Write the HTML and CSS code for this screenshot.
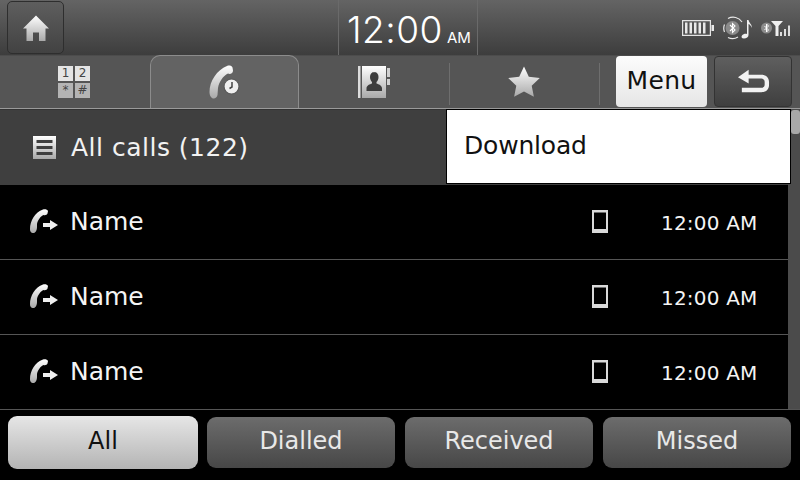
FILE: index.html
```html
<!DOCTYPE html>
<html lang="en">
<head>
  <meta charset="UTF-8" />
  <title>Call history</title>
  <link rel="stylesheet" href="styles.css">
</head>
<body>
  <svg class="defs" width="0" height="0">
    <defs>
      <linearGradient id="chrome" x1="0" y1="0" x2="0" y2="1">
        <stop offset="0" stop-color="#ffffff"/>
        <stop offset="1" stop-color="#a9a9a9"/>
      </linearGradient>
    </defs>
  </svg>

  <div class="screen">
    <header class="status">
      <button class="home">
        <svg width="28" height="28" viewBox="0 0 28 28">
          <path fill="url(#chrome)" d="M14 1.500 L27 14.500 L23.500 14.500 L23.500 27 L17 27 L17 18.500 L11 18.500 L11 27 L4.500 27 L4.500 14.500 L1 14.500 Z"/>
        </svg>
      </button>
      <div class="clock"><span class="clock-time">12:00</span><span class="clock-ampm">AM</span></div>
      <div class="status-icons">
        <svg width="33" height="18" viewBox="0 0 33 18">
          <path fill="none" stroke="#e4e4e4" stroke-width="1.200" d="M.6 1.600h27.800v14.800H.6z"/>
          <path fill="#e8e8e8" d="M3 3.500h2.500v11H3zM7.500 3.500H10v11H7.500zM12 3.500h2.500v11H12zM16.500 3.500H19v11h-2.500zM21 3.500h2.500v11H21zM29.500 6H32v6h-2.500z"/>
        </svg>
        <svg width="32" height="24" viewBox="0 0 32 24">
          <circle cx="10.500" cy="12" r="7" fill="#8a8a8a"/>
          <path fill="none" stroke="#e8e8e8" stroke-width="1.200" d="M6 2.500A10.500 10.500 0 0 1 20 6M6 21.500a10.500 10.500 0 0 0 10-.5M2.500 8.500A10 10 0 0 0 2.500 16"/>
          <path fill="none" stroke="#fff" stroke-width="1.100" d="M8 9l5 5-2.500 2.500v-9L13 10l-5 5"/>
          <path fill="#f0f0f0" d="M25 4h1.500c.5 3 3.500 4 3.500 8-1-2-2-3.500-3.500-4v11c0 2-2 3.500-4.500 3.500S19 21 20 19.500s3.500-2 5-1.500z"/>
        </svg>
        <svg width="32" height="18" viewBox="0 0 32 18">
          <circle cx="5.500" cy="9" r="5.500" fill="#8c8c8c"/>
          <path fill="none" stroke="#fff" stroke-width="1" d="M3.500 7l4 4-2 2V5l2 2-4 4"/>
          <path fill="#efefef" d="M10 2h12l-4.500 5v10h-3V7z"/>
          <path fill="#dcdcdc" d="M19 13h2v4h-2zM23 10h2v7h-2zM27 6.500h2V17h-2z"/>
        </svg>
      </div>
    </header>

    <nav class="tabs">
      <div class="tab">
        <div class="keypad">
          <span>1</span><span>2</span><span class="dim">*</span><span class="dim">#</span>
        </div>
      </div>
      <div class="tab tab-active">
        <svg width="34" height="36" viewBox="0 0 34 36">
          <path fill="url(#chrome)" d="M19 2C21 1 23.500 1.500 24.500 3.500L25 6.500C25 8.500 23.500 10 21.500 10L20 9.500C15 12 11 18 10 24L9.500 31C9 34 6 35.500 4 34C2.500 33 1.500 31 1.500 28C1.500 17 9 6 19 2Z"/>
          <circle cx="23.500" cy="22.500" r="7.500" fill="#efefef" stroke="#5a5a5a" stroke-width="1.200"/>
          <path fill="none" stroke="#444" stroke-width="1.500" d="M24 18v5l-2.500 1.500"/>
        </svg>
      </div>
      <div class="tab tab-line">
        <svg width="34" height="34" viewBox="0 0 34 34">
          <path fill="#dcdcdc" d="M1 1h2.500v32H1z"/>
          <path fill="url(#chrome)" d="M5 1h24v32H5z"/>
          <path fill="#d0d0d0" d="M30 3h3v9h-3zM30 14h3v6h-3z"/>
          <path fill="#3d3d3d" d="M17 7c3 0 4.500 2 4.500 5 0 2.500-1 4-2 5v1.500c2 1 5.500 1.500 5.500 5V26H9.500v-2.500c0-3.500 3.500-4 5.500-5V17c-1-1-2-2.500-2-5 0-3 1.500-5 4.500-5z"/>
        </svg>
      </div>
      <div class="tab tab-line">
        <svg width="34" height="34" viewBox="0 0 34 34">
          <path fill="url(#chrome)" d="M17 1.500l4.800 10.300 11 1.300-8.100 7.600 2.200 11.100L17 26.400 7.100 31.800l2.200-11.100-8.100-7.600 11-1.300z"/>
        </svg>
      </div>
      <div class="tab-actions">
        <button class="btn-menu">Menu</button>
        <button class="btn-back">
          <svg width="33" height="26" viewBox="0 0 34 26">
            <path fill="#f2f2f2" d="M1 8L12 .5v5h13c5 0 8 3 8 7.500v3c0 4.500-3 7.500-8 7.500H5v-4.500h19c3 0 4.500-1 4.500-3.500v-2.500c0-2.500-1.500-3.500-4.500-3.500H12v5z"/>
          </svg>
        </button>
      </div>
    </nav>

    <main class="content">
      <div class="list">
        <div class="list-head">
          <svg width="23" height="23" viewBox="0 0 23 23">
            <path fill="url(#chrome)" fill-rule="evenodd" d="M0 0h23v23H0zM3.500 4v3h16V4zM3.500 10v3h16v-3zM3.500 16v3h16v-3z"/>
          </svg>
          <span class="head-title">All calls (122)</span>
        </div>

        <div class="row">
          <svg class="call-icon" width="30" height="26" viewBox="0 0 30 26">
            <path fill="url(#chrome)" d="M14 .5C16 0 18.500 .5 19 2L18.500 4.500C18 6 16 6.500 14.500 6C12 7 9 10.500 8 15L8 18C8 22 6 24.500 3.500 24C1.500 23.500 1 22 1 20C1 12 6 3 14 .5Z"/>
            <path fill="#efefef" d="M14 14h7v-3l8 5-8 5v-3h-7z"/>
          </svg>
          <span class="row-name">Name</span>
          <svg class="device" width="16" height="23" viewBox="0 0 16 23">
            <path fill="#d9d9d9" fill-rule="evenodd" d="M0 0h16v23H0zM2 2.500V19h12V2.500z"/>
          </svg>
          <span class="row-time">12:00 AM</span>
        </div>
        <div class="row">
          <svg class="call-icon" width="30" height="26" viewBox="0 0 30 26">
            <path fill="url(#chrome)" d="M14 .5C16 0 18.500 .5 19 2L18.500 4.500C18 6 16 6.500 14.500 6C12 7 9 10.500 8 15L8 18C8 22 6 24.500 3.500 24C1.500 23.500 1 22 1 20C1 12 6 3 14 .5Z"/>
            <path fill="#efefef" d="M14 14h7v-3l8 5-8 5v-3h-7z"/>
          </svg>
          <span class="row-name">Name</span>
          <svg class="device" width="16" height="23" viewBox="0 0 16 23">
            <path fill="#d9d9d9" fill-rule="evenodd" d="M0 0h16v23H0zM2 2.500V19h12V2.500z"/>
          </svg>
          <span class="row-time">12:00 AM</span>
        </div>
        <div class="row">
          <svg class="call-icon" width="30" height="26" viewBox="0 0 30 26">
            <path fill="url(#chrome)" d="M14 .5C16 0 18.500 .5 19 2L18.500 4.500C18 6 16 6.500 14.500 6C12 7 9 10.500 8 15L8 18C8 22 6 24.500 3.500 24C1.500 23.500 1 22 1 20C1 12 6 3 14 .5Z"/>
            <path fill="#efefef" d="M14 14h7v-3l8 5-8 5v-3h-7z"/>
          </svg>
          <span class="row-name">Name</span>
          <svg class="device" width="16" height="23" viewBox="0 0 16 23">
            <path fill="#d9d9d9" fill-rule="evenodd" d="M0 0h16v23H0zM2 2.500V19h12V2.500z"/>
          </svg>
          <span class="row-time">12:00 AM</span>
        </div>
      </div>
      <div class="scrollbar"><div class="scroll-thumb"></div></div>

      <div class="dropdown">Download</div>
    </main>

    <footer class="filters">
      <button class="filter filter-on">All</button>
      <button class="filter">Dialled</button>
      <button class="filter">Received</button>
      <button class="filter">Missed</button>
    </footer>
  </div>
</body>
</html>
```

FILE: styles.css
```css
* {
  box-sizing: border-box;
}

body {
  margin: 0;
  background: #000;
  font-family: "DejaVu Sans", sans-serif;
}

button {
  font-family: inherit;
  padding: 0;
}

.defs {
  position: absolute;
}

.screen {
  width: 800px;
  height: 480px;
  overflow: hidden;
  display: flex;
  flex-direction: column;
}

/* top status bar */
.status {
  height: 55px;
  display: flex;
  align-items: stretch;
  background: linear-gradient(to bottom, #646464, #3d3d3d);
}

.home {
  width: 57px;
  height: 53px;
  margin: 1px 0 0 7px;
  display: flex;
  align-items: center;
  justify-content: center;
  border: 1px solid #2e2e2e;
  border-radius: 5px;
  background: linear-gradient(to bottom, #5e5e5e, #424242);
}

.clock {
  width: 140px;
  margin-left: 274px;
  display: flex;
  align-items: baseline;
  padding: 7px 0 0 8px;
  font-family: Inter, sans-serif;
  color: #fff;
  border-left: 1px solid #6a6a6a;
  border-right: 1px solid #6a6a6a;
}

.clock-time {
  font-size: 37px;
  font-weight: 300;
  letter-spacing: 0.5px;
}

.clock-ampm {
  font-size: 15px;
  margin-left: 4px;
}

.status-icons {
  margin-left: auto;
  padding-right: 7px;
  display: flex;
  align-items: center;
  gap: 7px;
}

/* tab row */
.tabs {
  height: 54px;
  display: flex;
  background: #555;
  border-bottom: 1px solid #9a9a9a;
  box-shadow: inset 0 1px 0 #4c4c4c;
}

.tab {
  width: 150px;
  height: 53px;
  padding-right: 2px;
  display: flex;
  align-items: center;
  justify-content: center;
  position: relative;
}

.tab-line::after {
  content: "";
  position: absolute;
  right: 0;
  top: 8px;
  bottom: 3px;
  width: 1px;
  background: #6e6e6e;
}

.tab-active {
  width: 149px;
  margin-right: 1px;
  padding-right: 0;
  background: #636363;
  border: 1px solid #8c8c8c;
  border-bottom: none;
  border-radius: 10px 10px 0 0;
}

.keypad {
  display: grid;
  grid-template-columns: repeat(2, 15px);
  grid-template-rows: repeat(2, 15px);
  gap: 2px;
}

.keypad span {
  display: flex;
  align-items: center;
  justify-content: center;
  font-size: 12px;
  color: #444;
  background: #e4e4e4;
}

.keypad .dim {
  background: #b4b4b4;
}

.tab-actions {
  flex: 1;
  display: flex;
  gap: 7px;
  padding: 1px 0 1px 16px;
}

.btn-menu {
  width: 91px;
  height: 51px;
  padding-bottom: 3px;
  font-size: 25px;
  letter-spacing: 0.3px;
  color: #111;
  border: none;
  border-radius: 4px;
  background: linear-gradient(to bottom, #fcfcfc, #e6e6e6);
}

.btn-back {
  width: 78px;
  height: 51px;
  display: flex;
  align-items: center;
  justify-content: center;
  border: 1px solid #333;
  border-radius: 4px;
  background: linear-gradient(to bottom, #5f5f5f, #3f3f3f);
}

/* list area */
.content {
  height: 301px;
  display: flex;
  position: relative;
}

.list {
  width: 788px;
  background: #000;
}

.list-head {
  height: 76px;
  display: flex;
  align-items: center;
  gap: 15px;
  padding-left: 33px;
  color: #f2f2f2;
  background: #3f3f3f;
  border-top: 1px solid #333;
}

.head-title {
  font-size: 25px;
  letter-spacing: 0.5px;
}

.row {
  height: 75px;
  display: flex;
  align-items: center;
  padding-right: 31px;
  color: #f4f4f4;
  border-bottom: 1px solid #555;
}

.call-icon {
  margin-left: 29px;
}

.row-name {
  margin-left: 11px;
  padding-bottom: 2px;
  font-size: 25px;
}

.device {
  margin: 0 0 2px auto;
}

.row-time {
  width: 96px;
  margin: 2px 0 0 53px;
  font-size: 20px;
  letter-spacing: 0.2px;
  white-space: nowrap;
  text-align: right;
}

.scrollbar {
  flex: 1;
  background: #4b4b4b;
  border-bottom: 1px solid #555;
}

.scroll-thumb {
  width: 9px;
  height: 24px;
  margin: 1px 0 0 3px;
  border-radius: 3px;
  background: #a8a8a8;
}

.dropdown {
  position: absolute;
  left: 446px;
  top: 0;
  width: 345px;
  height: 75px;
  display: flex;
  align-items: center;
  padding: 0 0 2px 17px;
  font-size: 25px;
  letter-spacing: -0.2px;
  color: #111;
  background: #fff;
  border: 1px solid #000;
}

/* filter buttons */
.filters {
  flex: 1;
  display: flex;
  align-items: center;
  gap: 10px;
  padding: 0 9px 5px 8px;
  background: #000;
}

.filter {
  width: 188px;
  height: 51px;
  padding-bottom: 3px;
  font-size: 24px;
  color: #e8e8e8;
  border: none;
  border-radius: 9px;
  background: linear-gradient(to bottom, #6c6c6c, #474747);
}

.filter-on {
  width: 190px;
  height: 53px;
  margin-right: -1px;
  color: #111;
  background: linear-gradient(to bottom, #e6e6e6, #b4b4b4);
}
```
